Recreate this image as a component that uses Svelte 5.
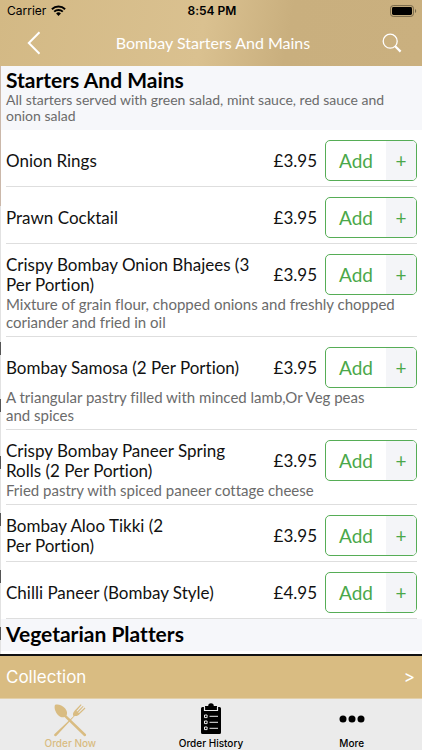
<script lang="ts">
	type Item = { name: string; price: string; description?: string };

	const items: Item[] = [
		{ name: 'Onion Rings', price: '£3.95' },
		{ name: 'Prawn Cocktail', price: '£3.95' },
		{
			name: 'Crispy Bombay Onion Bhajees (3 Per Portion)',
			price: '£3.95',
			description: 'Mixture of grain flour, chopped onions and freshly chopped coriander and fried in oil'
		},
		{
			name: 'Bombay Samosa (2 Per Portion)',
			price: '£3.95',
			description: 'A triangular pastry filled with minced lamb,Or Veg peas and\u00a0spices'
		},
		{
			name: 'Crispy Bombay Paneer Spring Rolls (2 Per Portion)',
			price: '£3.95',
			description: 'Fried pastry with spiced paneer cottage cheese'
		},
		{ name: 'Bombay Aloo Tikki (2\nPer Portion)', price: '£3.95' },
		{ name: 'Chilli Paneer (Bombay Style)', price: '£4.95' }
	];
</script>

<div class="app">
	<header>
		<div class="status">
			<span class="carrier">
				Carrier
				<svg width="15" height="11" viewBox="0 0 15 11" fill="none" stroke="#000" stroke-width="1.9">
					<path d="M.9 4.2a9.4 9.4 0 0 1 13.2 0M3.2 6.7a6.1 6.1 0 0 1 8.6 0" />
					<path d="M5.1 8.4a3.4 3.4 0 0 1 4.8 0L7.5 10.9z" fill="#000" stroke="none" />
				</svg>
			</span>
			<span class="time">8:54 PM</span>
			<span class="battery">
				<svg width="27" height="12" viewBox="0 0 27 12">
					<rect x=".6" y=".6" width="22.8" height="10.8" rx="2.6" fill="none" stroke="#75674b" />
					<rect x="2" y="2" width="20" height="8" rx="1.4" />
					<path d="M25 4v4c1.6-.6 1.6-3.4 0-4z" fill="#75674b" />
				</svg>
			</span>
		</div>
		<nav class="bar">
			<button class="icon" aria-label="Back">
				<svg width="14" height="24" viewBox="0 0 14 24" fill="none" stroke="#fff" stroke-width="2">
					<path d="M12.5 1.2 1.8 12l10.7 10.8" />
				</svg>
			</button>
			<h1>Bombay Starters And Mains</h1>
			<button class="icon" aria-label="Search">
				<svg width="20" height="20" viewBox="0 0 20 20" fill="none" stroke="#fff">
					<circle cx="8.2" cy="8.2" r="7" stroke-width="1.3" />
					<path d="m13.2 13.2 5.4 5.4" stroke-width="2.2" />
				</svg>
			</button>
		</nav>
	</header>

	<main>
		<section class="heading">
			<h2>Starters And Mains</h2>
			<p>All starters served with green salad, mint sauce, red sauce and onion salad</p>
		</section>

		<ul>
			{#each items as item}
				<li>
					<div class="row">
						<span class="name">{item.name}</span>
						<span class="price">{item.price}</span>
						<button class="add">
							<span class="label">Add</span>
							<span class="plus">+</span>
						</button>
					</div>
					{#if item.description}
						<p>{item.description}</p>
					{/if}
				</li>
			{/each}
		</ul>

		<section class="heading next">
			<h2>Vegetarian Platters</h2>
		</section>
	</main>

	<button class="collection">
		<span>Collection</span>
		<span>&gt;</span>
	</button>

	<nav class="tabs">
		<a href="#order" class="active">
			<svg width="34" height="34" viewBox="0 0 34 34" fill="currentColor">
				<path d="M2.2 1.8C4.7.6 9.4 2.2 12 5.3c2.2 2.6 2.6 5.3 1.5 7.2L33 31.2c.5 1.5-.8 2.5-2 1.7L11.5 14c-2 .8-4.9-.2-7-2.6C1.9 8.4.8 3.7 2.2 1.8z" />
				<path d="M1.3 31.2 20.5 13.3c-1-2.3-.5-4 1.3-5.9l6-6.2.8.7-5.1 6 .8.7 5.5-5.7.8.7-5.5 5.8.8.7 5.8-5.5.7.8-5.7 5.6c-1.8 1.8-3.3 2.5-5 1.9L3.3 33c-1.2.7-2.7-.5-2-1.8z" />
			</svg>
			Order Now
		</a>
		<a href="#history">
			<svg width="22" height="34" viewBox="0 0 22 34">
				<path d="M2.5 4H5V3h3.2a2.8 2.8 0 0 1 5.6 0H17v1h2.5A1.5 1.5 0 0 1 21 5.5v24a1.5 1.5 0 0 1-1.5 1.5h-17A1.5 1.5 0 0 1 1 29.5v-24A1.5 1.5 0 0 1 2.5 4z" />
				<path d="M4.5 4v3.5h13V4" fill="none" stroke="#ebebeb" stroke-width="1.2" />
				<path d="M4.5 12h2.6v2.6H4.5zM4.5 18h2.6v2.6H4.5zM4.5 24h2.6v2.6H4.5zM9.5 13.3H18M9.5 19.3H18M9.5 25.3H18" fill="none" stroke="#ebebeb" />
			</svg>
			Order History
		</a>
		<a href="#more">
			<svg width="26" height="34" viewBox="0 0 26 34">
				<circle cx="4" cy="16" r="3.5" />
				<circle cx="13" cy="16" r="3.5" />
				<circle cx="22" cy="16" r="3.5" />
			</svg>
			More
		</a>
	</nav>
</div>

<style>
	:global(body) {
		margin: 0;
		background: #fff;
	}

	.app {
		display: flex;
		flex-direction: column;
		min-height: 100vh;
		font-family: Lato, 'Open Sans', sans-serif;
		font-variant-ligatures: none;
		color: #111;
	}

	button {
		padding: 0;
		border: none;
		background: none;
		font-family: inherit;
		cursor: pointer;
	}

	h1,
	h2,
	p,
	ul {
		margin: 0;
		padding: 0;
	}

	svg {
		display: block;
	}

	header {
		height: 66px;
		background: linear-gradient(100deg, #d3b985 0%, #dac190 48%, #c9af7e 68%, #cab07f 100%);
	}

	.status {
		display: grid;
		grid-template-columns: 1fr auto 1fr;
		align-items: center;
		height: 21px;
		padding: 0 5px 0 7px;
		font-family: Inter, sans-serif;
		font-size: 12px;
		color: #000;
	}

	.carrier {
		display: flex;
		align-items: center;
		gap: 5px;
	}

	.time {
		font-weight: 600;
	}

	.battery {
		justify-self: end;
	}

	.bar {
		display: flex;
		align-items: center;
		justify-content: space-between;
		height: 43px;
		padding: 0 20px 0 24px;
	}

	.icon {
		display: flex;
		align-items: center;
		justify-content: center;
		width: 20px;
		height: 40px;
	}

	h1 {
		font-size: 16px;
		font-weight: 400;
		color: #fff;
	}

	/* sliver of the category list that sits behind this panel */
	main {
		flex: 1;
		padding-left: 1px;
		background:
			linear-gradient(#cbb8aa, #cbb8aa) 0 0 / 1px 140px no-repeat,
			repeating-linear-gradient(#555 0 13px, #e2e2e2 13px 57px) 0 276px / 1px 300px no-repeat,
			linear-gradient(#e2e2e2, #e2e2e2) 0 0 / 1px 100% no-repeat;
	}

	.heading {
		padding: 2px 5px 6px;
		background: #f6f7fa;
	}

	.heading h2 {
		font-size: 21px;
		line-height: 24px;
		font-weight: 700;
		color: #000;
	}

	.heading p {
		font-size: 14px;
		line-height: 16px;
		color: #6b6b6b;
	}

	.next {
		padding: 3px 5px 5px;
		border-bottom: 3px solid #fff;
	}

	ul {
		background: #fff;
	}

	li {
		margin: 0 5px;
		padding: 10px 0 5px;
		border-bottom: 1px solid #dedede;
		list-style: none;
	}

	li p {
		padding-right: 10px;
		font-size: 15px;
		line-height: 18px;
		color: #6b6b6b;
	}

	.row {
		display: grid;
		grid-template-columns: 1fr auto 92px;
		align-items: center;
		height: 41px;
	}

	.name,
	.price {
		font-size: 17px;
		line-height: 20px;
	}

	.name {
		white-space: pre-line;
	}

	.price {
		padding: 0 8px 0 16px;
	}

	.add {
		display: flex;
		height: 41px;
		overflow: hidden;
		border: 1px solid #56ad56;
		border-radius: 5px;
		background: #fff;
		color: #4aa84a;
		font-size: 19px;
		line-height: 39px;
	}

	.label {
		flex: 1;
	}

	.plus {
		width: 30px;
		background: #f4f5f8;
	}

	.collection {
		display: flex;
		align-items: center;
		justify-content: space-between;
		height: 45px;
		padding: 0 7px 0 6px;
		border-top: 2px solid #111;
		border-bottom: 1px solid #e3d0aa;
		background: #d9bc82;
		color: #fff;
		font-family: Inter, sans-serif;
		font-size: 17px;
	}

	.tabs {
		display: grid;
		grid-template-columns: repeat(3, 1fr);
		height: 51px;
		background: #ebebeb;
	}

	.tabs a {
		display: flex;
		flex-direction: column;
		align-items: center;
		padding-top: 4px;
		font-family: Inter, sans-serif;
		font-size: 10px;
		font-weight: 500;
		line-height: 12px;
		color: #000;
		text-decoration: none;
	}

	.tabs .active {
		color: #d9bc82;
	}
</style>
